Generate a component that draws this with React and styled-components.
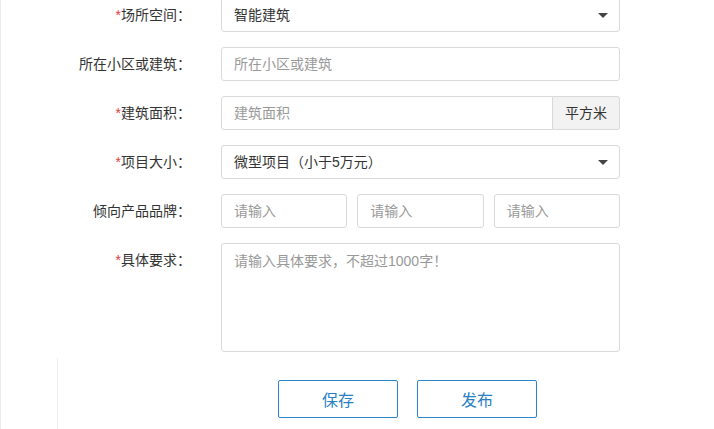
import React from "react";
import styled, { createGlobalStyle } from "styled-components";

const Global = createGlobalStyle`
  html, body { margin: 0; background: #fff; }
  body { font-family: "Liberation Sans", "Noto Sans CJK SC", sans-serif; font-size: 14px; color: #333; }
`;

const Page = styled.div`
  width: 714px;
  height: 429px;
  overflow: hidden;
  border-left: 1px solid #ececec;
  box-sizing: border-box;
  position: relative;
`;

const Form = styled.div`
  display: flex;
  flex-direction: column;
  gap: 15px;
  margin-top: -2px;
`;

const Row = styled.div`
  display: flex;
  align-items: flex-start;
`;

const Label = styled.div`
  width: 190px;
  text-align: right;
  line-height: 34px;
  font-size: 14px;
  color: #333;
  padding-right: 30px;
  flex-shrink: 0;
`;

const Star = styled.span`
  color: #e4393c;
`;

const Field = styled.div`
  width: 399px;
  display: flex;
  gap: ${(p) => p.$gap || 0}px;
`;

const Input = styled.div`
  flex: 1;
  height: ${(p) => p.$h || 34}px;
  box-sizing: border-box;
  border: 1px solid #d9d9d9;
  border-radius: ${(p) => p.$r || "3px"};
  padding: ${(p) => (p.$tall ? "8px 12px" : "0 12px")};
  line-height: ${(p) => (p.$tall ? "18px" : "32px")};
  color: ${(p) => (p.$value ? "#333" : "#999")};
  display: flex;
  align-items: ${(p) => (p.$tall ? "flex-start" : "center")};
  justify-content: space-between;
  background: #fff;
`;

const Caret = styled.span`
  width: 0;
  height: 0;
  border-left: 5px solid transparent;
  border-right: 5px solid transparent;
  border-top: 5px solid #444;
  margin-right: -1px;
`;

const Addon = styled.div`
  width: 67px;
  height: 34px;
  box-sizing: border-box;
  border: 1px solid #d9d9d9;
  border-left: none;
  border-radius: 0 3px 3px 0;
  background: #f2f2f2;
  line-height: 32px;
  text-align: center;
  color: #333;
`;

const Actions = styled.div`
  display: flex;
  gap: 19px;
  padding-left: 277px;
  margin-top: 28px;
`;

const Button = styled.button`
  width: 120px;
  height: 38px;
  border: 1px solid #2a86cb;
  border-radius: 2px;
  background: #fff;
  color: #2a80c4;
  font-family: inherit;
  font-size: 16px;
`;

const Divider = styled.div`
  position: absolute;
  left: 56px;
  top: 358px;
  bottom: 0;
  border-left: 1px solid #eeeeee;
`;

export default function App() {
  return (
    <Page>
      <Global />
      <Divider />
      <Form>
        <Row>
          <Label><Star>*</Star>场所空间：</Label>
          <Field><Input $value>智能建筑<Caret /></Input></Field>
        </Row>
        <Row>
          <Label>所在小区或建筑：</Label>
          <Field><Input>所在小区或建筑</Input></Field>
        </Row>
        <Row>
          <Label><Star>*</Star>建筑面积：</Label>
          <Field><Input $r="3px 0 0 3px">建筑面积</Input><Addon>平方米</Addon></Field>
        </Row>
        <Row>
          <Label><Star>*</Star>项目大小：</Label>
          <Field><Input $value>微型项目（小于5万元）<Caret /></Input></Field>
        </Row>
        <Row>
          <Label>倾向产品品牌：</Label>
          <Field $gap={10}>
            <Input>请输入</Input>
            <Input>请输入</Input>
            <Input>请输入</Input>
          </Field>
        </Row>
        <Row>
          <Label><Star>*</Star>具体要求：</Label>
          <Field><Input $tall $h={109}>请输入具体要求，不超过1000字！</Input></Field>
        </Row>
      </Form>
      <Actions>
        <Button>保存</Button>
        <Button>发布</Button>
      </Actions>
    </Page>
  );
}
